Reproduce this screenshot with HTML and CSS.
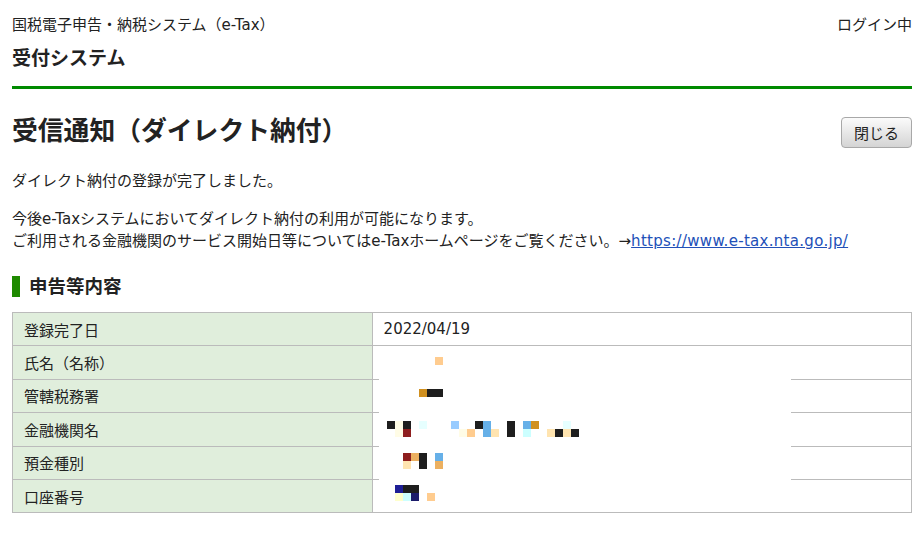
FILE: index.html
```html
<!DOCTYPE html>
<html lang="ja">
<head>
    <meta charset="utf-8">
    <title>受信通知（ダイレクト納付）</title>
    <link rel="stylesheet" href="styles.css">
</head>
<body>
    <div class="header">
        <div class="header-top">
            <span>国税電子申告・納税システム（e-Tax）</span>
            <span>ログイン中</span>
        </div>
        <div class="system-name">受付システム</div>
    </div>

    <div class="title-row">
        <h1>受信通知（ダイレクト納付）</h1>
        <button class="close-btn" type="button">閉じる</button>
    </div>

    <p class="message">ダイレクト納付の登録が完了しました。</p>
    <p class="message note">今後e-Taxシステムにおいてダイレクト納付の利用が可能になります。<br>ご利用される金融機関のサービス開始日等についてはe-Taxホームページをご覧ください。→<a href="#">https://www.e-tax.nta.go.jp/</a></p>

    <h2>申告等内容</h2>

    <div class="detail-wrap">
        <table class="detail">
            <tr><th>登録完了日</th><td>2022/04/19</td></tr>
            <tr><th>氏名（名称）</th><td></td></tr>
            <tr><th>管轄税務署</th><td></td></tr>
            <tr><th>金融機関名</th><td></td></tr>
            <tr><th>預金種別</th><td></td></tr>
            <tr><th>口座番号</th><td></td></tr>
        </table>

        <!-- personal data masked -->
        <div class="mask">
            <svg width="412" height="164" viewBox="0 0 412 164">
                <rect x="56" y="11" width="8" height="8" fill="#ffcc8f"/>

                <rect x="40" y="43" width="8" height="8" fill="#d09020"/>
                <rect x="48" y="43" width="16" height="8" fill="#1e1e1e"/>

                <rect x="8" y="75" width="8" height="8" fill="#1e1e1e"/>
                <rect x="16" y="75" width="8" height="8" fill="#fffce6"/>
                <rect x="24" y="75" width="8" height="8" fill="#1e1e1e"/>
                <rect x="40" y="75" width="8" height="8" fill="#e6ffff"/>
                <rect x="72" y="75" width="8" height="8" fill="#99ccff"/>
                <rect x="96" y="75" width="8" height="8" fill="#1e1e1e"/>
                <rect x="104" y="75" width="8" height="8" fill="#66b0e8"/>
                <rect x="128" y="75" width="8" height="8" fill="#1e1e1e"/>
                <rect x="144" y="75" width="8" height="8" fill="#66b0e8"/>
                <rect x="152" y="75" width="8" height="8" fill="#d09020"/>
                <rect x="184" y="75" width="8" height="8" fill="#e6ffff"/>
                <rect x="16" y="83" width="8" height="8" fill="#fffce6"/>
                <rect x="24" y="83" width="8" height="8" fill="#8e1e1e"/>
                <rect x="80" y="83" width="8" height="8" fill="#fffce6"/>
                <rect x="88" y="83" width="8" height="8" fill="#ffcc8f"/>
                <rect x="104" y="83" width="8" height="8" fill="#66b0e8"/>
                <rect x="112" y="83" width="8" height="8" fill="#ffe4b0"/>
                <rect x="128" y="83" width="8" height="8" fill="#1e1e1e"/>
                <rect x="144" y="83" width="8" height="8" fill="#ccffff"/>
                <rect x="168" y="83" width="8" height="8" fill="#ffe4b0"/>
                <rect x="176" y="83" width="8" height="8" fill="#1e1e1e"/>
                <rect x="184" y="83" width="8" height="8" fill="#ffe4b0"/>
                <rect x="192" y="83" width="8" height="8" fill="#1e1e1e"/>

                <rect x="24" y="107" width="8" height="8" fill="#8e1e1e"/>
                <rect x="32" y="107" width="8" height="8" fill="#ecb060"/>
                <rect x="40" y="107" width="8" height="16" fill="#1e1e1e"/>
                <rect x="56" y="107" width="8" height="8" fill="#66b0e8"/>
                <rect x="24" y="115" width="8" height="8" fill="#ffe4b0"/>
                <rect x="56" y="115" width="8" height="8" fill="#ecb060"/>

                <rect x="16" y="139" width="8" height="8" fill="#1e1e96"/>
                <rect x="24" y="139" width="16" height="8" fill="#1e1e1e"/>
                <rect x="16" y="147" width="8" height="8" fill="#ffffcc"/>
                <rect x="24" y="147" width="8" height="8" fill="#ccffff"/>
                <rect x="32" y="147" width="8" height="8" fill="#1c1c6a"/>
                <rect x="48" y="147" width="8" height="8" fill="#ffcc8f"/>
            </svg>
        </div>
    </div>
</body>
</html>
```

FILE: styles.css
```css
body {
    margin: 0;
    padding: 0 8px 0 12px;
    font-family: "DejaVu Sans", "Noto Sans CJK JP", sans-serif;
    font-size: 15px;
    color: #222;
    background: #fff;
}

.header {
    padding-top: 14px;
    padding-bottom: 15px;
    border-bottom: 3px solid #008a00;
}

.header-top {
    display: flex;
    justify-content: space-between;
    line-height: 22px;
}

.system-name {
    margin-top: 9px;
    font-size: 19px;
    font-weight: bold;
    line-height: 26px;
}

.title-row {
    display: flex;
    justify-content: space-between;
    align-items: flex-start;
    margin-top: 25px;
}

h1 {
    margin: 0;
    font-size: 25.8px;
    line-height: 34px;
    font-weight: bold;
}

.close-btn {
    flex-shrink: 0;
    margin-top: 3px;
    width: 71px;
    height: 31px;
    padding: 0;
    font-family: inherit;
    font-size: 15px;
    color: #222;
    background: linear-gradient(#fbfbfb, #d4d4d4);
    border: 1px solid #a8a8a8;
    border-radius: 4px;
}

.message {
    margin: 22px 0 0;
    line-height: 22px;
}

.message.note {
    margin-top: 16px;
}

.message a {
    color: #2250b8;
    letter-spacing: 0.3px;
}

h2 {
    margin: 24px 0 0;
    padding-left: 9px;
    border-left: 8px solid #1f8a00;
    font-size: 18.5px;
    line-height: 21px;
    font-weight: bold;
}

.detail-wrap {
    position: relative;
    margin-top: 15px;
}

.detail {
    width: 100%;
    border-collapse: collapse;
}

.detail th,
.detail td {
    height: 32.4px;
    padding: 0 11px;
    border: 1px solid #bbb;
    text-align: left;
    font-weight: normal;
}

.detail th {
    width: 40%;
    background: #e0eedc;
}

.mask {
    position: absolute;
    left: 367px;
    top: 34px;
    width: 412px;
    height: 164px;
    background: #fff;
}

.mask svg {
    display: block;
}
```
